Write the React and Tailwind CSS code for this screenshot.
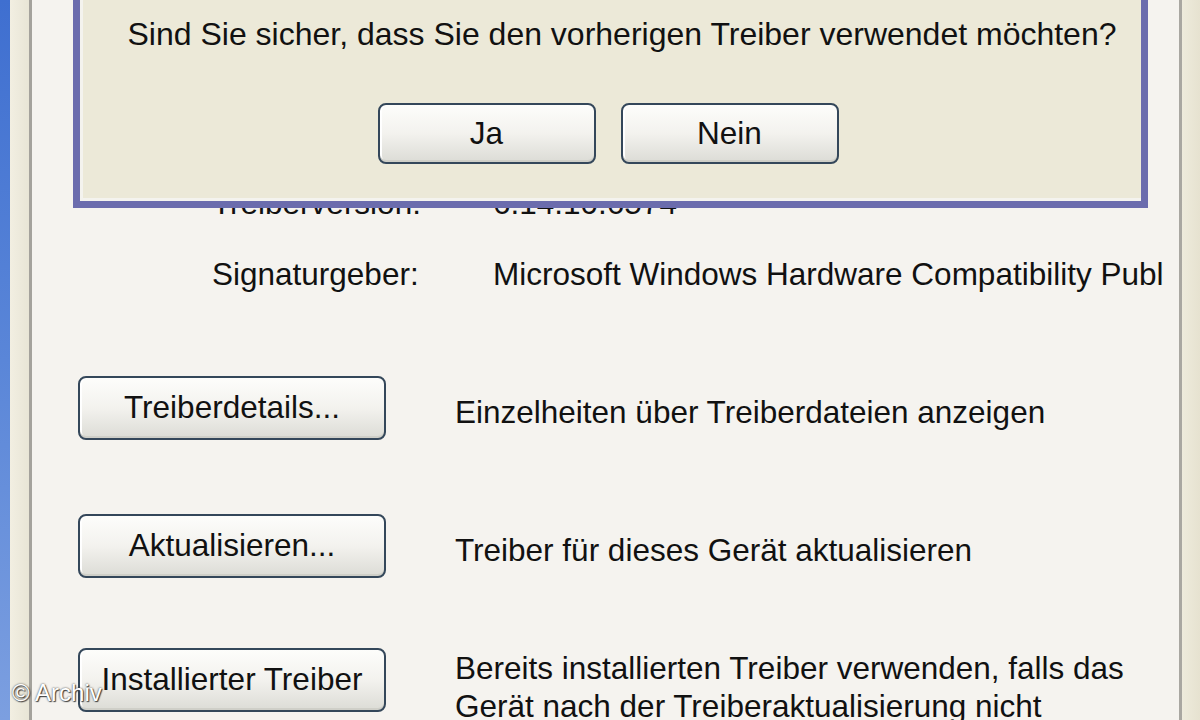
import React from "react";

const XpButton = ({ children, className = "" }) => (
  <div
    className={`flex items-center justify-center rounded-[8px] border-2 border-[#34475a] bg-gradient-to-b from-[#fdfdfb] via-[#f3f2ee] to-[#dcdcd6] shadow-[inset_0_-2px_0_#cfcfc8,inset_2px_0_0_#ffffff] text-[31.5px] text-[#111] ${className}`}
  >
    {children}
  </div>
);

const ActionRow = ({ label, children }) => (
  <div className="flex items-start">
    <XpButton className="w-[308px] h-[64px] shrink-0">{label}</XpButton>
    <div className="ml-[69px] pt-[17px] text-[31.5px] leading-[38px] text-[#111]">{children}</div>
  </div>
);

export default function App() {
  return (
    <div
      className="flex w-[1200px] h-[720px] overflow-hidden bg-[#ece9d8]"
      style={{ fontFamily: '"Liberation Sans", Arial, sans-serif' }}
    >
      {/* left window frame */}
      <div className="w-[10px] shrink-0 bg-gradient-to-b from-[#3f6fd0] via-[#5a86d8] to-[#7c9fe0]" />
      <div className="w-[19px] shrink-0 bg-gradient-to-r from-[#f2efe2] to-[#e8e5d6]" />
      <div className="w-[3px] shrink-0 bg-[#a4a29c]" />

      {/* property page */}
      <div className="relative flex-1 min-w-0 bg-[#f5f3ef]">
        <div className="pt-[183px] pl-[180px] text-[31.5px] leading-[40px] text-[#111]">
          <div className="flex">
            <span className="w-[281px]">Treiberversion:</span>
            <span>6.14.10.6574</span>
          </div>
          <div className="flex mt-[31px]">
            <span className="w-[281px]">Signaturgeber:</span>
            <span className="whitespace-nowrap">Microsoft Windows Hardware Compatibility Publ</span>
          </div>
        </div>

        <div className="mt-[82px] pl-[46px] flex flex-col">
          <ActionRow label="Treiberdetails...">Einzelheiten über Treiberdateien anzeigen</ActionRow>
          <div className="h-[74px]" />
          <ActionRow label="Aktualisieren...">Treiber für dieses Gerät aktualisieren</ActionRow>
          <div className="h-[70px]" />
          <ActionRow label="Installierter Treiber">
            <div className="-mt-[16px]">
              Bereits installierten Treiber verwenden, falls das
              <br />
              Gerät nach der Treiberaktualisierung nicht
            </div>
          </ActionRow>
        </div>

        {/* confirmation dialog over the page */}
        <div className="absolute left-[41px] top-[-40px] w-[1075px] h-[248px] border-[7px] border-[#6b6cad] bg-[#ece9d8]">
          <div className="h-full border-l-[3px] border-b-[3px] border-[#f4f3ee] flex flex-col items-center">
            <div className="mt-[47px] pl-[20px] text-[32px] leading-[40px] text-[#111] whitespace-nowrap">
              Sind Sie sicher, dass Sie den vorherigen Treiber verwendet möchten?
            </div>
            <div className="mt-[49px] mr-[8px] flex gap-[25px]">
              <XpButton className="w-[218px] h-[61px]">Ja</XpButton>
              <XpButton className="w-[218px] h-[61px]">Nein</XpButton>
            </div>
          </div>
        </div>

        {/* watermark */}
        <div className="absolute left-[-20px] bottom-[9px] text-[24px] text-white [text-shadow:0_0_2px_#333,1px_1px_1px_#444]">
          © Archiv
        </div>
      </div>

      {/* right window frame */}
      <div className="w-[3px] shrink-0 bg-[#a9a7a1]" />
      <div className="w-[18px] shrink-0 bg-gradient-to-r from-[#eeebdc] to-[#e6e2d0]" />
    </div>
  );
}
